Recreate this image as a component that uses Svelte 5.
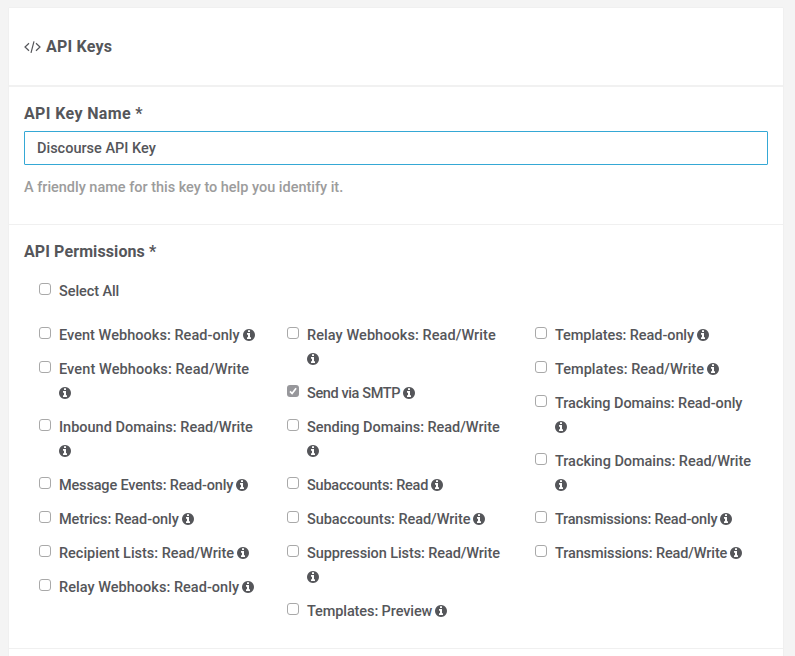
<script>
  // `tracking` is the letter-spacing of a label, in pixels.
  const columns = $state([
    [
      { label: 'Event Webhooks: Read-only', tracking: 0.04 },
      { label: 'Event Webhooks: Read/Write', tracking: 0.11, wrap: true },
      { label: 'Inbound Domains: Read/Write', tracking: 0, wrap: true },
      { label: 'Message Events: Read-only', tracking: -0.17 },
      { label: 'Metrics: Read-only', tracking: -0.1 },
      { label: 'Recipient Lists: Read/Write', tracking: -0.02 },
      { label: 'Relay Webhooks: Read-only', tracking: 0.03 }
    ],
    [
      { label: 'Relay Webhooks: Read/Write', tracking: 0.07, wrap: true },
      { label: 'Send via SMTP', tracking: -0.38, checked: true },
      { label: 'Sending Domains: Read/Write', tracking: -0.04, wrap: true },
      { label: 'Subaccounts: Read', tracking: -0.22 },
      { label: 'Subaccounts: Read/Write', tracking: -0.05 },
      { label: 'Suppression Lists: Read/Write', tracking: -0.1, wrap: true },
      { label: 'Templates: Preview', tracking: -0.1 }
    ],
    [
      { label: 'Templates: Read-only', tracking: -0.08 },
      { label: 'Templates: Read/Write', tracking: 0.04 },
      { label: 'Tracking Domains: Read-only', tracking: -0.08, wrap: true },
      { label: 'Tracking Domains: Read/Write', tracking: -0.04, wrap: true },
      { label: 'Transmissions: Read-only', tracking: -0.22 },
      { label: 'Transmissions: Read/Write', tracking: -0.12 }
    ]
  ]);
  let selectAll = $state(false);
  let keyName = $state('Discourse API Key');

  function toggleAll() {
    for (const column of columns) for (const item of column) item.checked = selectAll;
  }
</script>

{#snippet info()}
  <svg class="info" viewBox="0 128 1536 1536" aria-hidden="true">
    <path d="M1024 1376v-160q0-14-9-23t-23-9h-96v-512q0-14-9-23t-23-9h-320q-14 0-23 9t-9 23v160q0 14 9 23t23 9h96v320h-96q-14 0-23 9t-9 23v160q0 14 9 23t23 9h448q14 0 23-9t9-23zm-128-896v-160q0-14-9-23t-23-9h-192q-14 0-23 9t-9 23v160q0 14 9 23t23 9h192q14 0 23-9t9-23zm640 416q0 209-103 385.5t-279.5 279.5-385.5 103-385.5-103-279.5-279.5-103-385.5 103-385.5 279.5-279.5 385.5-103 385.5 103 279.5 279.5 103 385.5z" />
  </svg>
{/snippet}

{#snippet box(checked)}
  <span class="box" class:checked>
    {#if checked}
      <svg viewBox="0 0 12 12" aria-hidden="true"><path d="M3 6.3 5.1 8.5 9.1 3.2" /></svg>
    {/if}
  </span>
{/snippet}

<main class="card">
  <header>
    <svg class="code" viewBox="0 0 17 12" aria-hidden="true">
      <path d="M5 2.2 1 6l4 3.8M12 2.2 16 6l-4 3.8M10 .4 7 11.8" />
    </svg>
    <h1>API Keys</h1>
  </header>

  <section class="name">
    <label class="title" for="key-name">API Key Name <span class="star">*</span></label>
    <input id="key-name" type="text" bind:value={keyName} />
    <p class="help">A friendly name for this key to help you identify it.</p>
  </section>

  <section class="permissions">
    <h2 class="title">API Permissions <span class="star">*</span></h2>
    <label class="item all">
      <input type="checkbox" bind:checked={selectAll} onchange={toggleAll} />
      {@render box(selectAll)}
      <span class="text"><span class="label">Select All</span></span>
    </label>
    <div class="columns">
      {#each columns as column}
        <div class="column">
          {#each column as item}
            <label class="item">
              <input type="checkbox" bind:checked={item.checked} />
              {@render box(item.checked)}
              <span class="text" class:wrap={item.wrap}><span class="label" style:letter-spacing="{item.tracking}px">{item.label}</span>{@render info()}</span>
            </label>
          {/each}
        </div>
      {/each}
    </div>
  </section>
</main>

<style>
  :global(body) {
    background: #f4f4f4;
    overflow: hidden;
  }
  .card {
    box-sizing: border-box;
    width: 774px;
    height: 660px;
    margin: 8px 0 0 9px;
    background: #fff;
    box-shadow: 0 0 1px #ddd;
    color: #55565a;
    font: 500 14.5px/24px Roboto, sans-serif;
  }
  header {
    display: flex;
    align-items: center;
    box-sizing: border-box;
    height: 79px;
    padding: 0 15px;
    border-bottom: 2px solid #f1f1f1;
  }
  .code {
    width: 17px;
    height: 12px;
    margin-right: 5px;
    fill: none;
    stroke: #55565a;
    stroke-width: 1.2;
  }
  h1, .title {
    margin: 0;
    font-size: 16px;
    line-height: 24px;
    font-weight: 700;
    letter-spacing: 0.2px;
  }
  .title {
    display: block;
    height: 24px;
    line-height: 26px;
  }
  label.title { letter-spacing: 0.36px; }
  h2.title { letter-spacing: 0.1px; }
  section {
    box-sizing: border-box;
    padding: 14px 15px 0;
    border-bottom: 1px solid #f0f0f0;
  }
  .name { height: 138px; }
  .permissions { height: 424px; }
  .name input {
    display: block;
    box-sizing: border-box;
    width: 744px;
    height: 34px;
    margin: 6px 0 0;
    padding: 0 12px;
    border: 1px solid #35a8d5;
    border-radius: 1px;
    outline: none;
    color: inherit;
    font: inherit;
    background: #fff;
  }
  .help {
    margin: 11px 0 0;
    color: #9c9c9c;
    letter-spacing: -0.02px;
  }
  .item {
    display: flex;
    align-items: flex-start;
    margin-bottom: 10px;
  }
  .item.all {
    margin: 16px 0 20px 15px;
    letter-spacing: -0.08px;
  }
  .item input { display: none; }
  .columns { display: flex; }
  .column {
    box-sizing: border-box;
    width: 248px;
    padding-left: 15px;
  }
  .box {
    box-sizing: border-box;
    flex: none;
    width: 12px;
    height: 12px;
    margin: 4px 8px 0 0;
    border: 1px solid #a9a9a9;
    border-radius: 3px;
    background: #fff;
  }
  .box.checked {
    border: 0;
    background: #97979b;
  }
  .box svg {
    display: block;
    width: 12px;
    height: 12px;
    fill: none;
    stroke: #fff;
    stroke-width: 1.7;
  }
  .text {
    display: flex;
    align-items: center;
    white-space: nowrap;
  }
  .text.wrap {
    flex-direction: column;
    align-items: flex-start;
  }
  .label {
    height: 24px;
    line-height: 26px;
  }
  .info {
    width: 12px;
    height: 12px;
    margin-left: 3px;
    fill: #55565a;
  }
  .wrap .info { margin: 6px 0; }
</style>
